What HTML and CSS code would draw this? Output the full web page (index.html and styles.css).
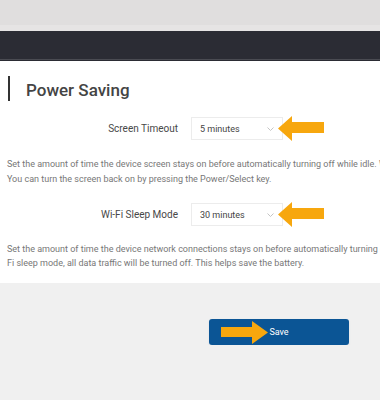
FILE: index.html
```html
<!DOCTYPE html>
<html lang="en">
<head>
  <meta charset="UTF-8">
  <title>Power Saving</title>
  <link rel="stylesheet" href="styles.css">
</head>
<body>
  <div class="top-band"></div>
  <div class="navbar"></div>

  <div class="panel">
    <h2 class="section-title">Power Saving</h2>

    <div class="field">
      <label class="field-label">Screen Timeout</label>
      <div class="select">
        <span>5 minutes</span>
        <svg class="chevron" width="7" height="4" viewBox="0 0 7 4"><polyline points="0.5,0.5 3.5,3.5 6.5,0.5" fill="none" stroke="#c4c4c4" stroke-width="1"/></svg>
      </div>
      <svg class="arrow arrow-left" width="46" height="26" viewBox="0 0 46 26"><polygon points="0,12.5 14,0 14,6 46,6 46,17 14,17 14,25" fill="#f7a70e"/></svg>
    </div>
    <p class="desc desc-first">Set the amount of time the device screen stays on before automatically turning off while idle. When the screen is off,<br>You can turn the screen back on by pressing the Power/Select key.</p>

    <div class="field">
      <label class="field-label">Wi-Fi Sleep Mode</label>
      <div class="select">
        <span>30 minutes</span>
        <svg class="chevron" width="7" height="4" viewBox="0 0 7 4"><polyline points="0.5,0.5 3.5,3.5 6.5,0.5" fill="none" stroke="#c4c4c4" stroke-width="1"/></svg>
      </div>
      <svg class="arrow arrow-left" width="46" height="26" viewBox="0 0 46 26"><polygon points="0,12.5 14,0 14,6 46,6 46,17 14,17 14,25" fill="#f7a70e"/></svg>
    </div>
    <p class="desc desc-second">Set the amount of time the device network connections stays on before automatically turning off. In Wi-<br>Fi sleep mode, all data traffic will be turned off. This helps save the battery.</p>
  </div>

  <div class="actions">
    <button class="save-btn" type="button">
      Save
      <svg class="arrow arrow-right" width="47" height="24" viewBox="0 0 47 24"><polygon points="47,11.5 31,0 31,6 0,6 0,16 31,16 31,23" fill="#f7a70e"/></svg>
    </button>
  </div>
</body>
</html>
```

FILE: styles.css
```css
body {
  margin: 0;
  background-color: #f0f0f0;
  font-family: Roboto, "Liberation Sans", sans-serif;
  overflow: hidden;
}

.top-band {
  height: 25px;
  background-color: #e0dede;
  border-bottom: 6px solid #e6e4e4;
}

.navbar {
  height: 28px;
  background-color: #2b2c34;
  border-bottom: 1px solid #4a4b52;
  box-shadow: 0 1px 0 #2b2c34;
}

.panel {
  background-color: #fff;
  padding: 15px 0 13px 0;
  margin-top: 1px;
  overflow: hidden;
}

.section-title {
  margin: 0 0 0 8px;
  padding-left: 16px;
  border-left: 2px solid #333;
  height: 25px;
  line-height: 28px;
  font-size: 17px;
  font-weight: 500;
  color: #444;
}

.field {
  position: relative;
  display: flex;
  align-items: center;
  margin-top: 16px;
}

.field-label {
  width: 191px;
  padding-right: 13px;
  box-sizing: border-box;
  text-align: right;
  font-size: 10px;
  color: #484848;
}

.select {
  width: 92px;
  height: 23px;
  box-sizing: border-box;
  border: 1px solid #ececec;
  padding: 0 8px;
  display: flex;
  align-items: center;
  justify-content: space-between;
  font-size: 9px;
  color: #444;
}

.arrow {
  position: absolute;
}

.arrow-left {
  left: 278px;
  top: -1px;
}

.desc {
  margin: 0 0 0 7px;
  white-space: nowrap;
  font-size: 9px;
  line-height: 15px;
  color: #777;
}

.desc-first {
  margin-top: 17px;
}

.desc-second {
  margin-top: 16px;
  line-height: 14px;
}

.actions {
  padding: 36px 0 0 209px;
}

.save-btn {
  position: relative;
  width: 140px;
  height: 26px;
  border: none;
  border-radius: 3px;
  background-color: #0b5595;
  color: #fff;
  font-family: Roboto, "Liberation Sans", sans-serif;
  font-size: 9px;
  box-shadow: 0 1px 2px #d8dde3;
}

.arrow-right {
  left: 12px;
  top: 2px;
}
```
